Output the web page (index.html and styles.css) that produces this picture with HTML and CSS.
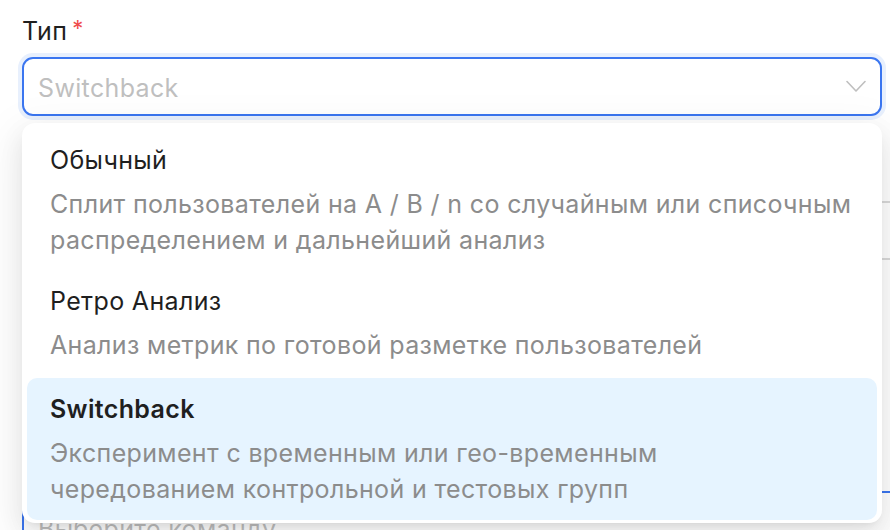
FILE: index.html
```html
<!DOCTYPE html>
<html lang="ru">
<head>
<meta charset="utf-8">
<title>Тип</title>
<link rel="stylesheet" href="styles.css">
</head>
<body>
<div class="page">
  <form class="form">
    <div class="field">
      <label class="label">Тип<span class="req">*</span></label>
      <div class="select focused">
        <span class="placeholder">Switchback</span>
        <svg class="chevron" width="20" height="13" viewBox="0 0 20 13"><path d="M1 1.5 L10 11 L19 1.5" fill="none" stroke="#bfbfbf" stroke-width="1.6" stroke-linecap="round" stroke-linejoin="round"/></svg>
      </div>
    </div>
    <div class="input wide field-2"></div>
    <div class="input wide active field-3"><span class="placeholder">Выберите команду</span></div>
  </form>

  <div class="dropdown">
    <div class="option">
      <div class="opt-title">Обычный</div>
      <div class="opt-desc">Сплит пользователей на A / B / n со случайным или списочным<br>распределением и дальнейший анализ</div>
    </div>
    <div class="option">
      <div class="opt-title">Ретро Анализ</div>
      <div class="opt-desc">Анализ метрик по готовой разметке пользователей</div>
    </div>
    <div class="option selected">
      <div class="opt-title">Switchback</div>
      <div class="opt-desc">Эксперимент с временным или гео-временным<br>чередованием контрольной и тестовых групп</div>
    </div>
  </div>
</div>
</body>
</html>
```

FILE: styles.css
```css
* { box-sizing: border-box; }
html, body {
  margin: 0;
  padding: 0;
  background: #ffffff;
  overflow: hidden;
}
body {
  font-family: Inter, "Noto Sans", sans-serif;
  color: #1f1f1f;
  width: 890px;
  height: 530px;
  letter-spacing: 0.35px;
}
.page {
  position: relative;
  width: 890px;
  height: 530px;
  overflow: hidden;
}
.form {
  padding: 15px 0 0 22px;
}
.field {
  display: flex;
  flex-direction: column;
  gap: 10px;
}
.label {
  font-size: 25px;
  line-height: 32px;
  color: #1f1f1f;
  display: flex;
  align-items: flex-start;
}
.req {
  color: #ef4b4b;
  font-size: 22px;
  line-height: 1;
  margin-left: 5px;
  margin-top: 2px;
}
.select, .input {
  height: 59px;
  border: 2px solid #d9d9d9;
  border-radius: 11px;
  background: #fff;
  display: flex;
  align-items: center;
  padding: 2px 14px 0 14px;
  justify-content: space-between;
}
.select { width: 860px; }
.select.focused {
  border-color: #3b76f0;
  box-shadow: 0 0 0 4px #e8f0fd;
}
.placeholder {
  font-size: 25px;
  color: #bfbfbf;
  line-height: 32px;
  white-space: nowrap;
}
.chevron { display: block; margin-top: -2px; }
.wide { width: 900px; }
.field-2 { margin-top: 85px; }
.field-3 { margin-top: 231px; }
.input.active {
  border-color: #3b76f0;
  align-items: flex-start;
  padding-top: 20px;
  height: 90px;
}
.dropdown {
  position: absolute;
  top: 123px;
  left: 22px;
  width: 860px;
  background: #fff;
  border-radius: 13px;
  padding: 5px 5px 3px 5px;
  box-shadow: 0 9px 25px 0 rgba(0,0,0,0.08), 0 5px 9px -6px rgba(0,0,0,0.12), 0 14px 44px 12px rgba(0,0,0,0.05);
  display: flex;
  flex-direction: column;
}
.option {
  padding: 14px 12px 11px 23px;
  border-radius: 10px;
}
.opt-title {
  font-size: 25px;
  line-height: 36px;
  color: #1f1f1f;
}
.opt-desc {
  margin-top: 8px;
  font-size: 25px;
  line-height: 36px;
  color: #8c8c8c;
  white-space: nowrap;
}
.selected {
  margin-top: 4px;
  padding-top: 13px;
  padding-bottom: 13px;
  background: #e6f4ff;
}
.selected .opt-title { font-weight: 600; }
```
